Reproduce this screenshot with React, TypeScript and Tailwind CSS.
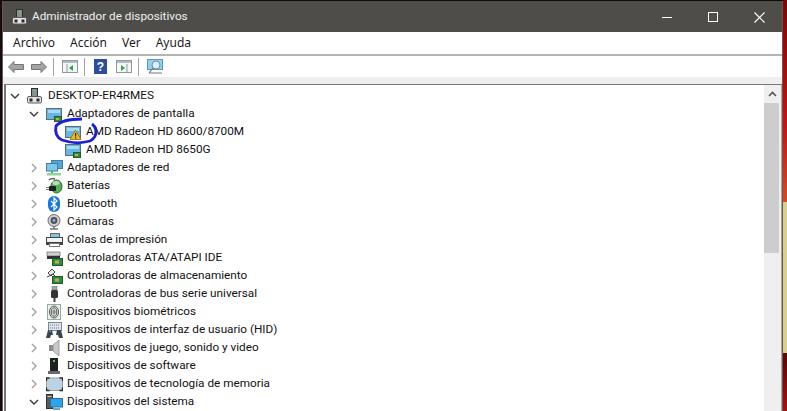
import type { ReactNode } from "react";

function Tower() {
  return (
    <svg width="15" height="16" viewBox="0 0 15 16" className="block shrink-0">
      <rect x="4.5" y="0.5" width="6" height="9" fill="#8d8d8d" stroke="#2c2c2c" />
      <rect x="7" y="2" width="1.5" height="2" fill="#3ddc5a" />
      <rect x="0.5" y="8.5" width="14" height="6.5" rx="1.5" fill="#e4e4e4" stroke="#5a5a5a" />
      <rect x="2.5" y="10.5" width="3" height="3" fill="#2c2c2c" />
      <rect x="9.5" y="10.5" width="3" height="3" fill="#2c2c2c" />
    </svg>
  );
}

function Monitor({ warn }: { warn?: boolean }) {
  return (
    <svg width="17" height="16" viewBox="0 0 17 16" className="block shrink-0">
      <rect x="0.5" y="2.5" width="15" height="11" fill="#66b6e4" stroke="#5d6c75" />
      <rect x="2" y="4" width="12" height="3" fill="#a6dbf5" />
      {!warn && <rect x="8.5" y="10.5" width="7" height="5" fill="#2f8a42" stroke="#1f5a2c" />}
      {!warn && <rect x="10" y="12" width="3" height="2" fill="#c9a94a" />}
      {warn && <path d="M10.5 6 L16 15.5 L5 15.5 Z" fill="#f4b81e" stroke="#94690a" strokeWidth="0.8" />}
      {warn && <rect x="10" y="9" width="1.2" height="3.5" fill="#2a1c00" />}
      {warn && <rect x="10" y="13.3" width="1.2" height="1.2" fill="#2a1c00" />}
    </svg>
  );
}

function Network() {
  return (
    <svg width="17" height="16" viewBox="0 0 17 16" className="block shrink-0">
      <rect x="5.5" y="0.5" width="11" height="8" fill="#4fa8dc" stroke="#4a7c99" />
      <rect x="0.5" y="3.5" width="11" height="7.5" fill="#7cc8ee" stroke="#4a7c99" />
      <path d="M6 11v3" stroke="#49b55e" strokeWidth="2" />
      <rect x="1" y="13" width="14" height="2.5" fill="#8fd39c" />
    </svg>
  );
}

function Battery() {
  return (
    <svg width="17" height="16" viewBox="0 0 17 16" className="block shrink-0">
      <path d="M3 2 Q5 0 9 1" stroke="#555" strokeWidth="1.4" fill="none" />
      <ellipse cx="10.5" cy="8.5" rx="5.5" ry="6.5" fill="#55b05a" stroke="#2c6b30" />
      <ellipse cx="10" cy="5" rx="3.5" ry="2" fill="#b5e0b5" />
      <rect x="3" y="8" width="7" height="5" rx="1" fill="#1e1e1e" />
      <path d="M0 9.5h3M0 11.5h3" stroke="#777" />
    </svg>
  );
}

function Bluetooth() {
  return (
    <svg width="17" height="16" viewBox="0 0 17 16" className="block shrink-0">
      <rect x="2" y="0" width="12" height="16" rx="6" fill="#1478e0" />
      <path d="M5 5l6 6-3 3V2l3 3-6 6" stroke="#fff" strokeWidth="1.2" fill="none" />
    </svg>
  );
}

function Camera() {
  return (
    <svg width="17" height="16" viewBox="0 0 17 16" className="block shrink-0">
      <circle cx="8" cy="6.5" r="6" fill="#d0d0d0" stroke="#6a6a6a" />
      <circle cx="8" cy="6.5" r="3.4" fill="#48535c" />
      <circle cx="8" cy="6.5" r="1.4" fill="#8fb4cc" />
      <path d="M4 15h8M8 12v3" stroke="#777" strokeWidth="1.5" />
    </svg>
  );
}

function Printer() {
  return (
    <svg width="17" height="16" viewBox="0 0 17 16" className="block shrink-0">
      <rect x="4.5" y="1.5" width="9" height="4" fill="#7fc4e8" stroke="#666" />
      <rect x="0.5" y="5.5" width="16" height="7" fill="#f2f2f2" stroke="#444" />
      <rect x="1" y="10" width="15" height="2.5" fill="#3e3e3e" />
      <rect x="3.5" y="11.5" width="10" height="3" fill="#fff" stroke="#777" />
    </svg>
  );
}

function Drive({ top }: { top?: boolean }) {
  return (
    <svg width="17" height="16" viewBox="0 0 17 16" className="block shrink-0">
      {top ? (
        <path d="M2 5l4-4 3 3-4 4zM1 9l6-3 3 3" fill="#e8e8e8" stroke="#444" />
      ) : (
        <g>
          <rect x="1" y="2" width="13" height="4" fill="#cfcfcf" stroke="#555" strokeWidth="0.6" />
          <rect x="1" y="6" width="13" height="3" fill="#333" />
        </g>
      )}
      <rect x="6.5" y="8.5" width="10" height="7" fill="#2f8a42" stroke="#1f5a2c" />
      <rect x="9" y="10.5" width="4" height="3" fill="#c9a94a" />
    </svg>
  );
}

function Usb() {
  return (
    <svg width="17" height="16" viewBox="0 0 17 16" className="block shrink-0">
      <rect x="6" y="0" width="5" height="4" fill="#a8a8a8" stroke="#666" strokeWidth="0.5" />
      <rect x="5" y="4" width="7" height="8" rx="1.5" fill="#333" />
      <rect x="7.5" y="12" width="2" height="4" fill="#444" />
    </svg>
  );
}

function Finger() {
  return (
    <svg width="17" height="16" viewBox="0 0 17 16" className="block shrink-0">
      <rect x="1.5" y="0.5" width="13" height="15" fill="#e9efeb" stroke="#8fb0a0" />
      <ellipse cx="8" cy="8" rx="4.5" ry="6" fill="none" stroke="#555" />
      <ellipse cx="8" cy="8" rx="2.8" ry="4.2" fill="none" stroke="#555" />
      <ellipse cx="8" cy="8" rx="1" ry="2.2" fill="none" stroke="#555" />
    </svg>
  );
}

function Hid() {
  return (
    <svg width="17" height="16" viewBox="0 0 17 16" className="block shrink-0">
      <rect x="2.5" y="0.5" width="13" height="8" fill="#dfe5ea" stroke="#7a8791" />
      <path d="M4 3h10M4 6h10" stroke="#6a7781" strokeDasharray="1 1" />
      <path d="M0 16l2-8h4l1 5h3l1-5h4l2 8h-4l-1-3H5l-1 3z" fill="#39454f" />
      <rect x="3" y="8" width="2" height="2" fill="#3f7fc0" />
    </svg>
  );
}

function Speaker() {
  return (
    <svg width="17" height="16" viewBox="0 0 17 16" className="block shrink-0">
      <rect x="3" y="5" width="4" height="6" fill="#8c8c8c" />
      <path d="M7 5l6-5v16l-6-5z" fill="#c8c8c8" stroke="#8a8a8a" strokeWidth="0.7" />
    </svg>
  );
}

function Software() {
  return (
    <svg width="17" height="16" viewBox="0 0 17 16" className="block shrink-0">
      <rect x="4" y="0" width="8" height="13" fill="#202020" />
      <rect x="7" y="2" width="2" height="2" fill="#3ddc5a" />
      <rect x="2" y="13" width="12" height="3" fill="#6a6a6a" />
    </svg>
  );
}

function Memory() {
  return (
    <svg width="17" height="16" viewBox="0 0 17 16" className="block shrink-0">
      <rect x="0.5" y="2" width="16" height="12.5" rx="1.5" fill="#bcd3e4" stroke="#8da0ad" />
      <path d="M0.5 5V2h3M13.5 2h3v3M16.5 11.5v3h-3M3.5 14.5h-3v-3" fill="none" stroke="#2c2c2c" strokeWidth="1.3" />
    </svg>
  );
}

function SystemDev() {
  return (
    <svg width="17" height="16" viewBox="0 0 17 16" className="block shrink-0">
      <rect x="0.5" y="0.5" width="6" height="14" fill="#5a5a5a" stroke="#333" />
      <rect x="1.5" y="2" width="4" height="1" fill="#ccc" />
      <rect x="4.5" y="4.5" width="12" height="8.5" fill="#2ea4ea" stroke="#2c6e96" />
      <rect x="7" y="14" width="7" height="2" fill="#6fa8c8" />
    </svg>
  );
}

function Chevron({ open }: { open?: boolean }) {
  return (
    <svg width="10" height="10" viewBox="0 0 10 10" className="block">
      {open ? (
        <path d="M1 3l4 4 4-4" fill="none" stroke="#404040" strokeWidth="1.5" />
      ) : (
        <path d="M3 1l4 4-4 4" fill="none" stroke="#a6a6a6" strokeWidth="1.5" />
      )}
    </svg>
  );
}

function ArrowBtn({ flip }: { flip?: boolean }) {
  return (
    <svg width="16" height="12" viewBox="0 0 16 12" className={`block ${flip ? "-scale-x-100" : ""}`}>
      <path d="M0.5 6L6 0.5v3h9.5v5H6v3z" fill="#a4a4a4" stroke="#757575" />
    </svg>
  );
}

function PaneIcon({ right }: { right?: boolean }) {
  return (
    <svg width="16" height="13" viewBox="0 0 16 13" className="block">
      <rect x="0.5" y="0.5" width="15" height="12" fill="#f6f6f6" stroke="#8c9aa3" />
      <rect x="1" y="1" width="14" height="2" fill="#b0bcc4" />
      {right ? (
        <path d="M5 5l4 3-4 3z" fill="#2fa344" />
      ) : (
        <path d="M11 5L7 8l4 3z" fill="#2fa344" />
      )}
      <path d={right ? "M11 4v8" : "M5 4v8"} stroke="#8c9aa3" />
    </svg>
  );
}

function Sep() {
  return <div className="h-[18px] w-px bg-[#a0a0a0]" />;
}

type Row = { label: string; icon: ReactNode; open?: boolean; indent?: number; noChevron?: boolean };

const rows: Row[] = [
  { label: "DESKTOP-ER4RMES", icon: <Tower />, open: true, indent: 0 },
  { label: "Adaptadores de pantalla", icon: <Monitor />, open: true, indent: 1 },
  { label: "AMD Radeon HD 8600/8700M", icon: <Monitor warn />, indent: 2, noChevron: true },
  { label: "AMD Radeon HD 8650G", icon: <Monitor />, indent: 2, noChevron: true },
  { label: "Adaptadores de red", icon: <Network />, indent: 1 },
  { label: "Baterías", icon: <Battery />, indent: 1 },
  { label: "Bluetooth", icon: <Bluetooth />, indent: 1 },
  { label: "Cámaras", icon: <Camera />, indent: 1 },
  { label: "Colas de impresión", icon: <Printer />, indent: 1 },
  { label: "Controladoras ATA/ATAPI IDE", icon: <Drive />, indent: 1 },
  { label: "Controladoras de almacenamiento", icon: <Drive top />, indent: 1 },
  { label: "Controladoras de bus serie universal", icon: <Usb />, indent: 1 },
  { label: "Dispositivos biométricos", icon: <Finger />, indent: 1 },
  { label: "Dispositivos de interfaz de usuario (HID)", icon: <Hid />, indent: 1 },
  { label: "Dispositivos de juego, sonido y video", icon: <Speaker />, indent: 1 },
  { label: "Dispositivos de software", icon: <Software />, indent: 1 },
  { label: "Dispositivos de tecnología de memoria", icon: <Memory />, indent: 1 },
  { label: "Dispositivos del sistema", icon: <SystemDev />, open: true, indent: 1 },
];

function TreeRow({ row }: { row: Row }) {
  const pad = row.indent === 0 ? "h-[19px] pl-[4px]" : row.indent === 1 ? "h-[18px] pl-[23px]" : "h-[18px] pl-[42px]";
  return (
    <div className={`flex items-center ${pad}`}>
      <div className="flex w-[17px] shrink-0 items-center">
        {!row.noChevron && <Chevron open={row.open} />}
      </div>
      <div className="flex w-[21px] shrink-0 items-center">{row.icon}</div>
      <span className="whitespace-nowrap font-['Roboto',sans-serif] text-[11.75px] text-[#111111]">{row.label}</span>
    </div>
  );
}

export default function App() {
  return (
    <div className="relative flex h-[411px] w-[787px] overflow-hidden bg-[#150808] font-['Noto_Sans',sans-serif]">
      <div className="w-[2px] shrink-0 bg-[#1c0a0a]" />
      <div className="flex min-w-0 flex-1 flex-col pt-[1px]">
        <div className="flex min-h-0 flex-1 flex-col border-x border-[#5c5c5c] bg-white">
          <div className="flex h-[31px] shrink-0 items-center bg-[#4f4d4a] pl-[9px] pt-[1px] text-white">
            <Tower />
            <span className="ml-[5px] font-['Roboto',sans-serif] text-[11.75px] text-[#f0f0f0]">Administrador de dispositivos</span>
            <div className="ml-auto flex items-center">
              <div className="flex w-[46px] justify-center">
                <div className="h-px w-[10px] bg-white" />
              </div>
              <div className="flex w-[46px] justify-center">
                <div className="h-[10px] w-[10px] border border-white" />
              </div>
              <div className="flex w-[46px] justify-center">
                <svg width="11" height="11" viewBox="0 0 11 11">
                  <path d="M0.5 0.5l10 10M10.5 0.5l-10 10" stroke="#fff" strokeWidth="1.2" />
                </svg>
              </div>
            </div>
          </div>

          <div className="flex h-[22px] shrink-0 items-center gap-[15px] pl-[10px] text-[12px] text-[#1a1a1a]">
            <span>Archivo</span>
            <span>Acción</span>
            <span>Ver</span>
            <span>Ayuda</span>
          </div>

          <div className="flex h-[23px] shrink-0 items-center border-t-2 border-[#b4b4b4] pl-[5px]">
            <ArrowBtn />
            <div className="ml-[7px]">
              <ArrowBtn flip />
            </div>
            <div className="ml-[6px]">
              <Sep />
            </div>
            <div className="ml-[8px]">
              <PaneIcon />
            </div>
            <div className="ml-[6px]">
              <Sep />
            </div>
            <div className="ml-[9px] flex h-[15px] w-[13px] items-center justify-center bg-[#2b4f9e] font-['Liberation_Sans',sans-serif] text-[12px] font-bold leading-none text-white">
              ?
            </div>
            <div className="ml-[9px]">
              <PaneIcon right />
            </div>
            <div className="ml-[6px]">
              <Sep />
            </div>
            <div className="ml-[8px]">
              <svg width="16" height="15" viewBox="0 0 16 15" className="block">
                <rect x="0.5" y="0.5" width="15" height="10" fill="#93d0f0" stroke="#5f95b3" />
                <circle cx="9" cy="6" r="4" fill="#d9f0fb" stroke="#6f8f9f" />
                <path d="M6 9l-4 5M2 14h13" stroke="#777" strokeWidth="1.2" />
              </svg>
            </div>
          </div>

          <div className="h-[7px] shrink-0 bg-[#eeeeee]" />

          <div className="ml-[1px] flex min-h-0 flex-1 border-t border-l-2 border-[#777777]">
            <div className="min-w-0 flex-1 pt-[1px]">
              {rows.map((row) => (
                <TreeRow key={row.label} row={row} />
              ))}
            </div>
            <div className="flex w-[17px] shrink-0 flex-col bg-[#efefef]">
              <div className="flex h-[18px] items-center justify-center">
                <svg width="9" height="6" viewBox="0 0 9 6">
                  <path d="M1 5l3.5-3.5L8 5" fill="none" stroke="#555" strokeWidth="1.6" />
                </svg>
              </div>
              <div className="h-[150px] w-[15px] bg-[#cdcdcd]" />
            </div>
            <div className="w-px shrink-0 bg-[#a8a8a8]" />
          </div>
        </div>
      </div>
      <div className="flex w-[4px] shrink-0 flex-col">
        <div className="h-[202px] bg-[linear-gradient(180deg,#7a0808,#c81010_60%,#d84a20)]" />
        <div className="h-[151px] bg-[#d9d08c]" />
        <div className="flex-1 bg-[linear-gradient(180deg,#5a0505,#a81010)]" />
      </div>

      <svg
        className="absolute left-[50px] top-[115px]"
        width="50"
        height="32"
        viewBox="50 115 50 32"
      >
        <path
          d="M82 119 Q62 119 56 126 Q54 136 62 140 Q76 145 90 141 Q97 137 96 130 Q95 126 92 124"
          fill="none"
          stroke="#1c20d4"
          strokeWidth="2.8"
        />
      </svg>
    </div>
  );
}
